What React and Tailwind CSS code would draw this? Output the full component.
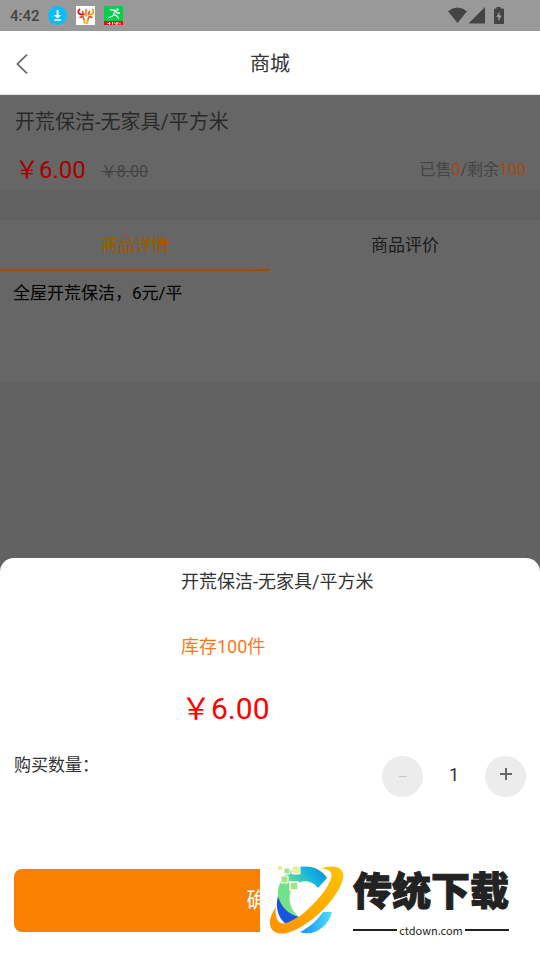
import { useState } from "react";

function StatusBar() {
  return (
    <div className="flex h-[31px] shrink-0 items-center bg-[#999] pl-[10px] pr-[35px] text-[#444]">
      <span className="w-[38px] text-[15px] font-medium leading-[20px]">4:42</span>
      <div className="flex items-center gap-[9px]">
        <svg className="size-[19px]" viewBox="0 0 19 19" aria-hidden="true">
          <circle cx="9.5" cy="9.5" r="9.5" fill="#0bbcff" />
          <path d="M8.6 4h2v5h2.8l-3.800 3.600L5.800 9h2.800zM6.200 13.200h7v1.500h-7z" fill="#fff" />
        </svg>
        <svg className="size-[19px]" viewBox="0 0 19 19" aria-hidden="true">
          <path d="M0 0h19v19H0z" fill="#fff" />
          <path d="M4 3C1 5 2 8 5 8.500h3.500" fill="none" stroke="#c81e20" strokeWidth="1.800" />
          <path d="M16 3c2.500 2 1.500 5-1 5.500h-3.500" fill="none" stroke="#f0a01a" strokeWidth="1.800" />
          <path d="M6 5l2 3M14 5l-2 3" fill="none" stroke="#dc4a1c" strokeWidth="1.400" />
          <path d="M10 3v7.500" fill="none" stroke="#e8801a" strokeWidth="1.600" />
          <path d="M3.500 11.500L7 10.500M16.500 11.500l-3.500-1" fill="none" stroke="#cf3a20" strokeWidth="1.500" />
          <path d="M7 10.500l1.500 4.500M13 10.500L11.500 15" fill="none" stroke="#e0601c" strokeWidth="1.600" />
          <path d="M8.500 14v3h3v-3" fill="none" stroke="#f2b01c" strokeWidth="1.700" />
        </svg>
        <svg className="size-[19px]" viewBox="0 0 19 19" aria-hidden="true">
          <path d="M0 0h19v19H0z" fill="#06cf4a" />
          <path d="M0 15h19v4H0z" fill="#f30808" />
          <circle cx="13.500" cy="3.500" r="1.200" fill="#fff" />
          <path d="M6 3.500l5.500 1-2 3.800 3.500 1.700 1.500 2.500M9.500 8.300L8 10.500 4.500 11.500M11.500 4.500l1.500 2.500h3" fill="none" stroke="#fff" strokeWidth="1.300" />
          <path d="M3.500 17.500h3M5.500 16v3M8.500 16v2.500M10.500 16.500l1 2M13 16v3M12 17h2.500M16 16.500v2" fill="none" stroke="#fff" strokeWidth="1" />
        </svg>
      </div>
      <div className="ml-auto flex items-center">
        <svg className="h-[17px] w-[20px]" viewBox="0 0 20 17" fill="#444" aria-hidden="true">
          <path d="M0 4.200Q9.500-3.200 19 4.200L9.500 16z" />
        </svg>
        <svg className="h-[17px] w-[18px]" viewBox="0 0 18 17" fill="#444" aria-hidden="true">
          <path d="M17 0v16.500H.500z" />
        </svg>
        <svg className="ml-[7px] h-[17px] w-[12px]" viewBox="0 0 12 17" aria-hidden="true">
          <path d="M3.500 0h4v1.500H10q1 0 1 1V16q0 1-1 1H2q-1 0-1-1V2.500q0-1 1-1h1.500z" fill="#444" />
          <path d="M6.500 4.500L3.300 10h2.200v4.500l3.200-6H6.500z" fill="#999" />
        </svg>
      </div>
    </div>
  );
}

function Header() {
  return (
    <header className="grid h-16 shrink-0 grid-cols-[1fr_auto_1fr] items-center border-b border-[#e8e4dc] bg-white px-4 pt-[2px]">
      <button type="button" aria-label="返回" className="justify-self-start">
        <svg className="h-5 w-3" viewBox="0 0 12 20" fill="none" stroke="#666" strokeWidth="1.700" aria-hidden="true">
          <path d="M11 .700L1.400 10 11 19.300" />
        </svg>
      </button>
      <h1 className="text-[20px] leading-[28px] text-[#333]">商城</h1>
    </header>
  );
}

function Product() {
  return (
    <main className="flex-1 bg-[#626262]">
      <section className="h-24 bg-[#666] pl-[15px] pr-[14px] pt-[13px]">
        <h2 className="text-[20px] leading-[28px] text-[#2a2a2a]">开荒保洁-无家具/平方米</h2>
        <div className="mt-[17px] flex items-center">
          <span className="text-[24px] leading-[34px] text-[#a80000]">￥6.00</span>
          <del className="ml-[15px] pt-[4px] text-[16px] leading-[24px] text-[#444]">￥8.00</del>
          <span className="ml-auto text-[16px] leading-[24px] text-[#444]">
            已售<span className="text-[#a8480c]">0</span>/剩余<span className="text-[#a8480c]">100</span>
          </span>
        </div>
      </section>
      <section className="mt-[29px] h-[163px] bg-[#666]">
        <div className="grid h-[51px] grid-cols-2 text-[17px] leading-[24px]">
          <button type="button" className="border-b-2 border-[#9c5000] text-[#a05800]">商品详情</button>
          <button type="button" className="border-b-2 border-transparent text-[#1c1c1c]">商品评价</button>
        </div>
        <p className="px-[13px] pt-[10px] text-[17px] leading-[24px] text-black">全屋开荒保洁，6元/平</p>
      </section>
    </main>
  );
}

function Watermark() {
  return (
    <div className="absolute bottom-0 right-0 flex h-[102px] w-[280px] bg-white pl-[8px]">
      <svg className="mt-[3px] h-[80px] w-[80px] shrink-0" viewBox="0 0 80 80" aria-hidden="true">
        <defs>
          <linearGradient id="ringTop" x1="0" y1="1" x2="1" y2="0">
            <stop offset="0" stopColor="#7be97a" />
            <stop offset=".45" stopColor="#6fe08e" />
            <stop offset=".75" stopColor="#16b3e0" />
            <stop offset="1" stopColor="#0787d8" />
          </linearGradient>
          <linearGradient id="orbit" x1="0" y1="1" x2="1" y2="0">
            <stop offset="0" stopColor="#ff9000" />
            <stop offset="1" stopColor="#ffc400" />
          </linearGradient>
          <linearGradient id="ringLow" x1="0" y1="0" x2="1" y2="0">
            <stop offset="0" stopColor="#168cff" />
            <stop offset="1" stopColor="#4de0f5" />
          </linearGradient>
        </defs>
        <path d="M12 44C7 31 11 18 21 11 33 2 51 4 59 17L50 27C44 19 33 18 26 25 19 32 20 47 31 56L18 62z" fill="url(#ringTop)" />
        <path d="M10 35c3 11 10 18 21 21l-13 7C10 57 7 46 10 35z" fill="#1955df" />
        <path d="M32 71c8-4 16-10 23-20h9C60 66 46 76 32 71z" fill="url(#ringLow)" />
        <path d="M8 46C1 56-1 66 7 71c10 5 25-3 40-15 12-10 24-24 28-38 2-10-6-16-23-10 10-1 14 4 10 12-4 10-14 21-25 31C26 60 15 65 11 61 8 58 7 52 8 46z" fill="url(#orbit)" />
        <path d="M24 5h8v8h-8z" fill="#e6f19b" stroke="#fff" />
        <path d="M16 7h6v6h-6zM13 15h7v7h-7z" fill="#a5e482" stroke="#fff" />
        <path d="M10 5h4v4h-4z" fill="#e6f19b" />
        <path d="M22 21h8v8h-8z" fill="#9fe57d" stroke="#fff" strokeWidth="1.500" />
      </svg>
      <div className="ml-[5px] w-[156px] text-[#222]">
        <div className="mt-[6px] whitespace-nowrap text-[39px] font-black leading-[56px] [-webkit-text-stroke:1px_#222]">传统下载</div>
        <div className="mt-[3px] flex items-center gap-[2px]">
          <span className="h-[2px] flex-1 bg-[#222]" />
          <span className="font-['Noto_Sans_CJK_SC',sans-serif] text-[11px] leading-[14px]">ctdown.com</span>
          <span className="h-[2px] flex-1 bg-[#222]" />
        </div>
      </div>
    </div>
  );
}

function PurchaseSheet() {
  const [count, setCount] = useState(1);
  return (
    <section className="relative z-10 -mt-3 flex h-[402px] shrink-0 flex-col rounded-t-[14px] bg-white px-[14px]">
      <div className="pl-[167px]">
        <h2 className="pt-[11px] text-[18px] leading-[26px] text-[#333]">开荒保洁-无家具/平方米</h2>
        <p className="mt-[39px] text-[18px] leading-[26px] text-[#ff761a]">库存100件</p>
        <p className="mt-[28px] text-[30px] leading-[42px] text-[#f00]">￥6.00</p>
      </div>
      <div className="mt-[26px] flex justify-between">
        <label htmlFor="quantity" className="text-[17px] leading-[18px] text-[#333]">购买数量：</label>
        <div className="flex items-center">
          <button type="button" aria-label="减少" onClick={() => setCount(Math.max(1, count - 1))} className="flex size-[41px] items-center justify-center rounded-full bg-[#ececec]">
            <span className="h-px w-2 bg-[#c8c8c8]" />
          </button>
          <input id="quantity" value={count} readOnly className="w-[62px] pb-[3px] text-center text-[18px] leading-[24px] text-[#333]" />
          <button type="button" aria-label="增加" onClick={() => setCount(count + 1)} className="flex size-[41px] items-center justify-center rounded-full bg-[#ececec] pb-[5px]">
            <svg className="size-3" viewBox="0 0 12 12" stroke="#666" strokeWidth="2" aria-hidden="true">
              <path d="M6 0v12M0 6h12" />
            </svg>
          </button>
        </div>
      </div>
      <button type="button" className="mb-[28px] mt-auto h-[63px] shrink-0 rounded-[8px] bg-[#f98000] pb-[2px] text-[21px] leading-[28px] text-white">确 定</button>
      <Watermark />
    </section>
  );
}

export default function App() {
  return (
    <div className="flex min-h-screen flex-col bg-[#626262] font-[Roboto,'Noto_Sans_CJK_SC',sans-serif]">
      <StatusBar />
      <Header />
      <Product />
      <PurchaseSheet />
    </div>
  );
}
